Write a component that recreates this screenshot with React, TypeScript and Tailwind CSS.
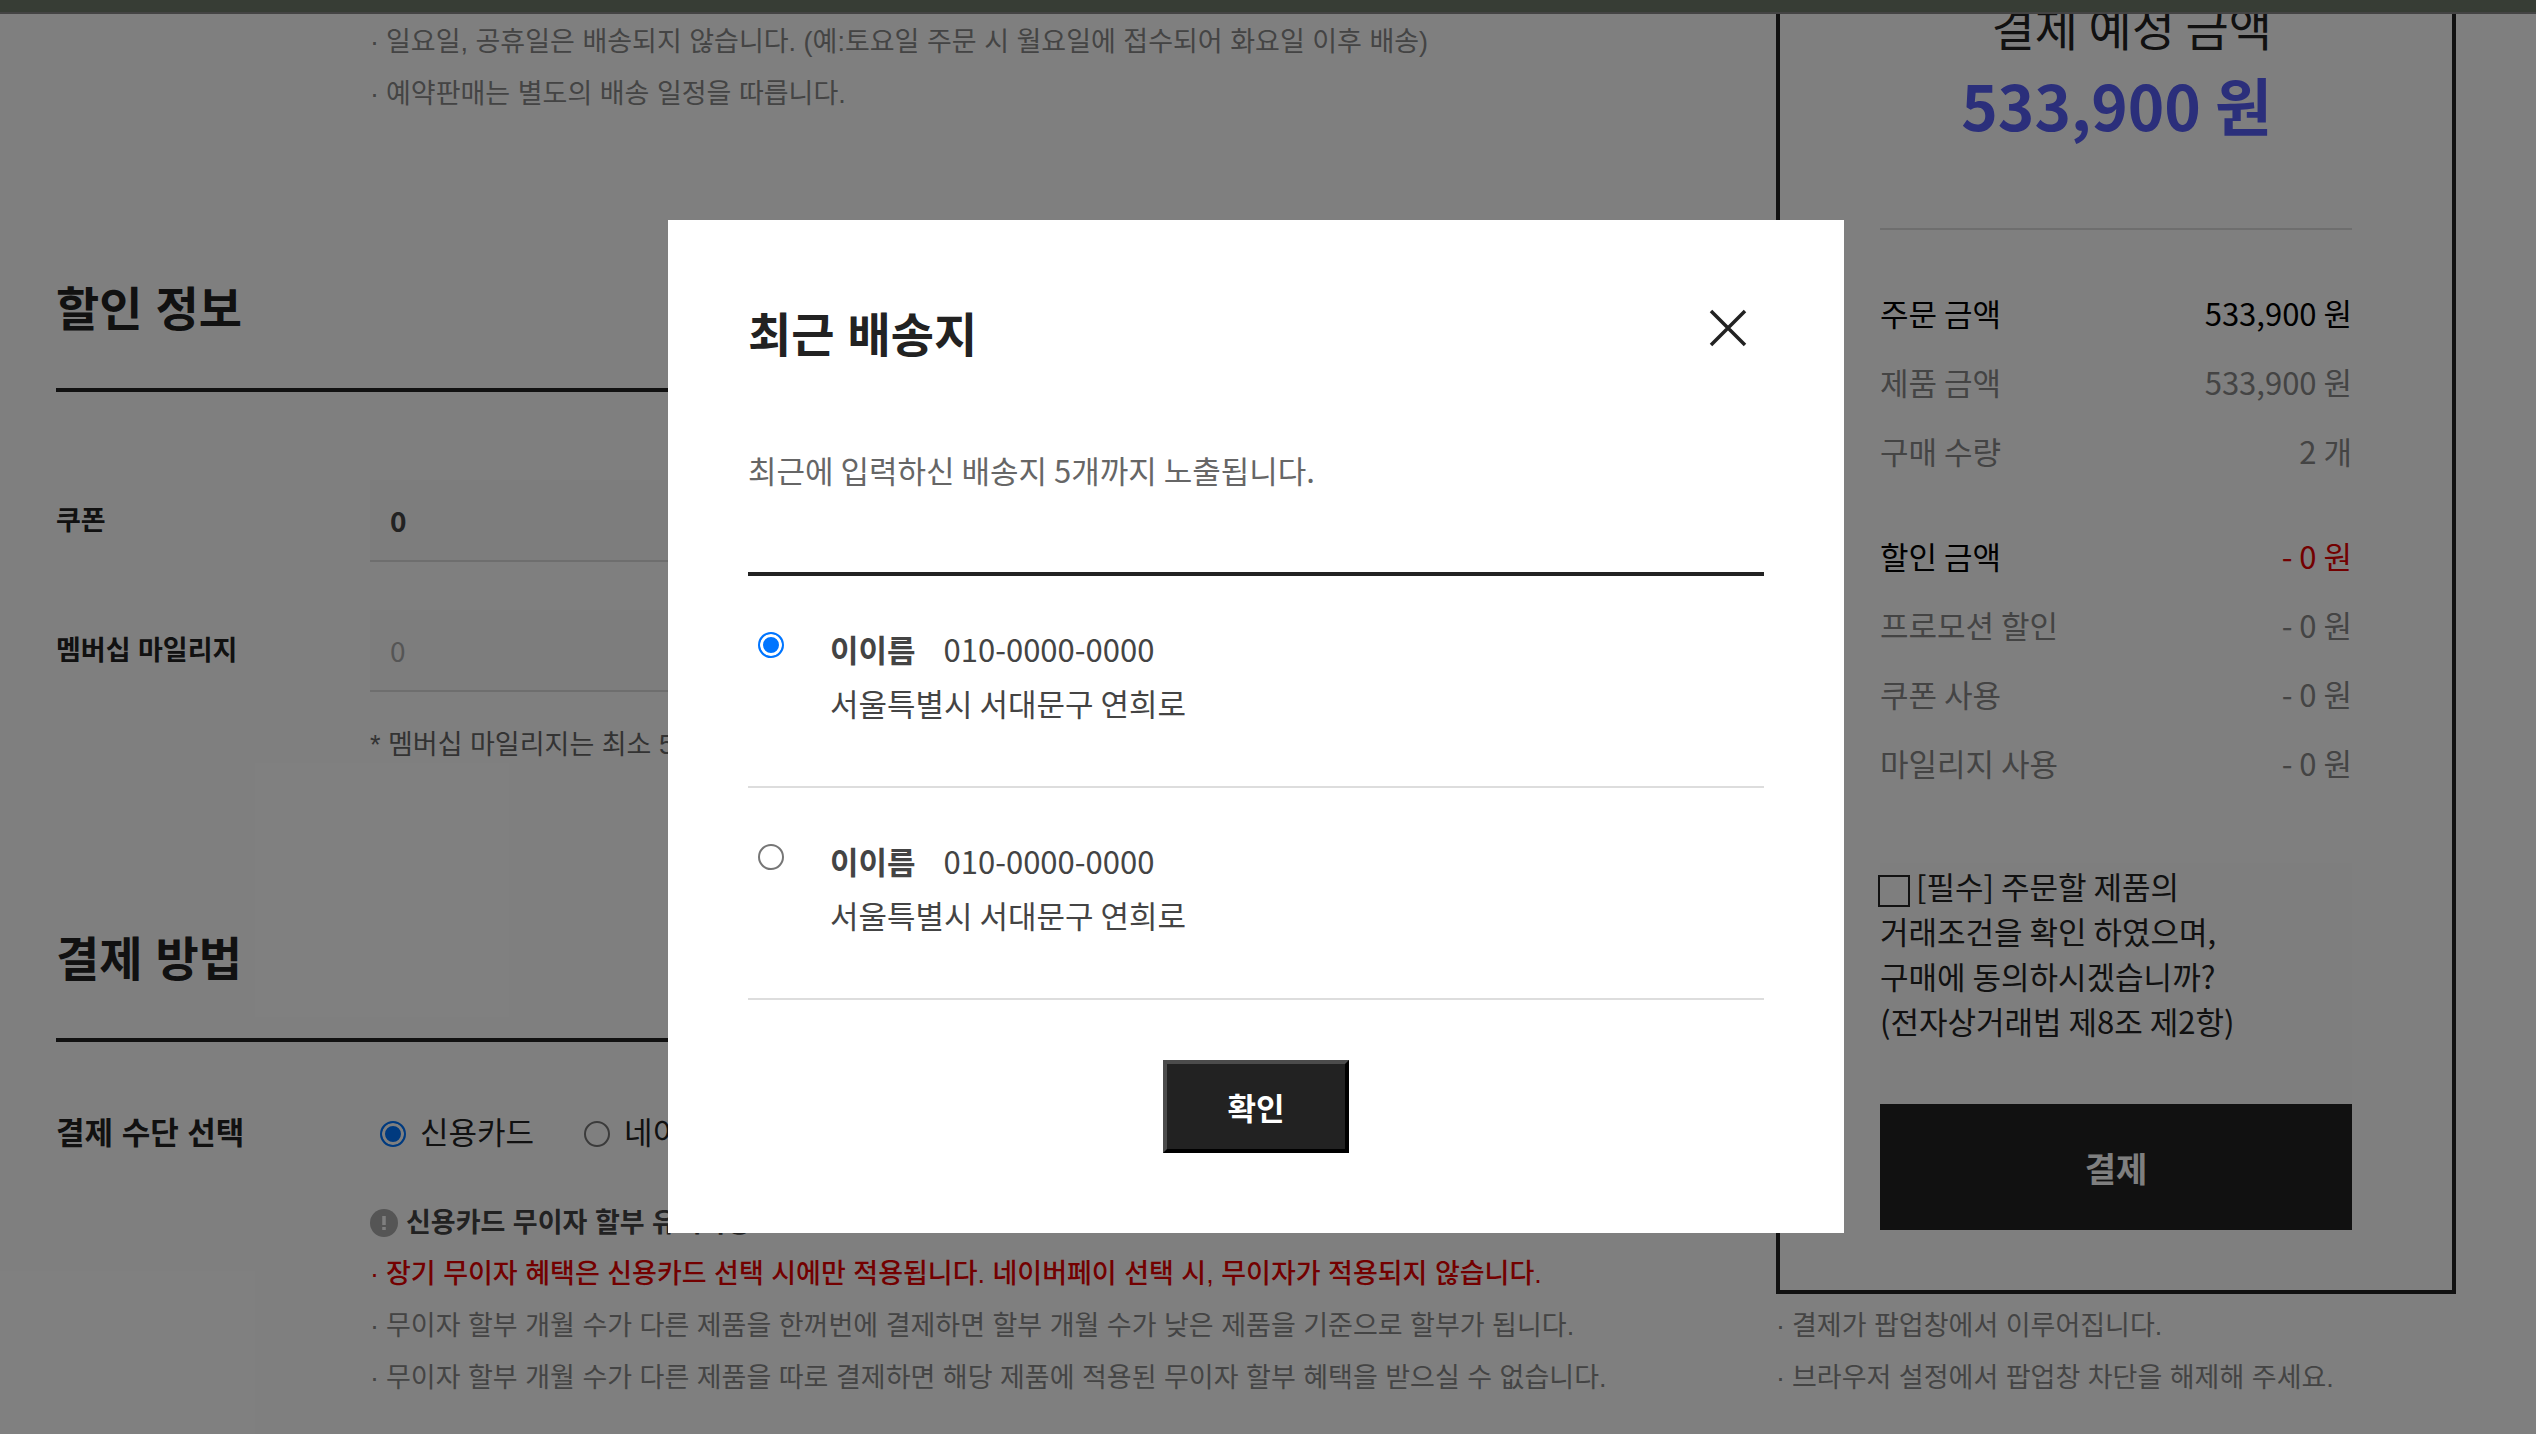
import * as React from "react"

const deliveryNotes = [
  "일요일, 공휴일은 배송되지 않습니다. (예:토요일 주문 시 월요일에 접수되어 화요일 이후 배송)",
  "예약판매는 별도의 배송 일정을 따릅니다.",
]

const installmentNotes = [
  "무이자 할부 개월 수가 다른 제품을 한꺼번에 결제하면 할부 개월 수가 낮은 제품을 기준으로 할부가 됩니다.",
  "무이자 할부 개월 수가 다른 제품을 따로 결제하면 해당 제품에 적용된 무이자 할부 혜택을 받으실 수 없습니다.",
]

const popupNotes = [
  "결제가 팝업창에서 이루어집니다.",
  "브라우저 설정에서 팝업창 차단을 해제해 주세요.",
]

const orderRows = [
  { label: "주문 금액", value: "533,900 원", labelClass: "text-black", valueClass: "text-black" },
  { label: "제품 금액", value: "533,900 원", labelClass: "text-[#888]", valueClass: "text-[#888]" },
  { label: "구매 수량", value: "2 개", labelClass: "text-[#888]", valueClass: "text-[#888]" },
]

const discountRows = [
  { label: "할인 금액", value: "- 0 원", labelClass: "text-black", valueClass: "text-[#e60000]" },
  { label: "프로모션 할인", value: "- 0 원", labelClass: "text-[#888]", valueClass: "text-[#888]" },
  { label: "쿠폰 사용", value: "- 0 원", labelClass: "text-[#888]", valueClass: "text-[#888]" },
  { label: "마일리지 사용", value: "- 0 원", labelClass: "text-[#888]", valueClass: "text-[#888]" },
]

const addresses = [
  { id: "addr-1", name: "이이름", phone: "010-0000-0000", address: "서울특별시 서대문구 연희로" },
  { id: "addr-2", name: "이이름", phone: "010-0000-0000", address: "서울특별시 서대문구 연희로" },
]

// Headings and running text take their spaces and punctuation from the Latin face
const proseFont = "font-['Liberation_Sans','Noto_Sans_CJK_KR',sans-serif]"

export default function App() {
  const [open, setOpen] = React.useState(true)

  return (
    <div className="relative min-h-screen overflow-hidden bg-white text-[#222] font-['Noto_Sans_CJK_KR','Noto_Sans',sans-serif]">
      <header className="relative z-10 h-[14px] border-b-2 border-[#888] bg-[#6f7a6b]" />

      <main className="flex items-start pl-14 pr-20">
        <div className="flex-1 pr-20 pt-0.5">
          <NoteList notes={deliveryNotes} className="pl-[314px]" />
          <DiscountSection />
          <PaymentSection />
        </div>
        <OrderSummary />
      </main>

      {open && <AddressModal onClose={() => setOpen(false)} />}
    </div>
  )
}

function NoteList({ notes, className = "" }: { notes: string[]; className?: string }) {
  return (
    <ul className={proseFont + " text-[27px] leading-[52px] text-[#888] whitespace-nowrap " + className}>
      {notes.map((note) => (
        <li key={note} className="flex">
          <span className="w-4">·</span>
          {note}
        </li>
      ))}
    </ul>
  )
}

function SectionTitle({ children }: { children: React.ReactNode }) {
  return (
    <h2 className={proseFont + " mt-[156px] border-b-4 border-[#222] pb-11 text-[47px] leading-[68px] font-bold"}>
      {children}
    </h2>
  )
}

function DiscountSection() {
  return (
    <section className={proseFont}>
      <SectionTitle>할인 정보</SectionTitle>
      <div className="flex items-center pt-[88px]">
        <label htmlFor="coupon" className="w-[314px] text-[27px] font-bold">쿠폰</label>
        <input
          id="coupon"
          defaultValue="0"
          className="h-[82px] flex-1 border-b-2 border-[#ddd] bg-[#fafafa] px-5 font-['Noto_Sans_CJK_KR',sans-serif] text-[28px] font-bold text-[#444]"
        />
      </div>
      <div className="flex items-center pt-12">
        <label htmlFor="mileage" className="w-[314px] text-[27px] font-bold">멤버십 마일리지</label>
        <input
          id="mileage"
          placeholder="0"
          className="h-[82px] flex-1 border-b-2 border-[#ddd] bg-[#fafafa] px-5 font-['Noto_Sans_CJK_KR',sans-serif] text-[28px] placeholder:text-[#aaa]"
        />
      </div>
      <p className="mt-7 pl-[314px] text-[27px] leading-[50px] text-[#666]">
        * 멤버십 마일리지는 최소 5,000부터 사용 가능합니다.
      </p>
    </section>
  )
}

function PaymentSection() {
  return (
    <section className={proseFont}>
      <SectionTitle>결제 방법</SectionTitle>
      <div className="flex items-center pt-[66px] text-[31px] leading-[52px]">
        <span className="w-[314px] font-bold">결제 수단 선택</span>
        <Radio id="pay-card" name="pay" defaultChecked className="ml-2.5" />
        <label htmlFor="pay-card" className="ml-3.5">신용카드</label>
        <Radio id="pay-naver" name="pay" className="ml-[50px]" />
        <label htmlFor="pay-naver" className="ml-3.5">네이버페이</label>
      </div>
      <div className="mt-[38px] pl-[314px] text-[27px] leading-[52px] whitespace-nowrap">
        <p className="flex items-center gap-2 leading-[50px] font-bold text-[#444]">
          <svg viewBox="0 0 28 28" className="size-7">
            <circle cx="14" cy="14" r="14" fill="#aaa" />
            <path d="M14 7v9M14 18v3" stroke="#fff" strokeWidth="3.5" />
          </svg>
          신용카드 무이자 할부 유의사항
        </p>
        <p className="flex font-medium text-[#e60000]">
          <span className="w-4">·</span>
          장기 무이자 혜택은 신용카드 선택 시에만 적용됩니다. 네이버페이 선택 시, 무이자가 적용되지 않습니다.
        </p>
      </div>
      <NoteList notes={installmentNotes} className="pl-[314px]" />
    </section>
  )
}

function Radio({ className = "", ...props }: React.InputHTMLAttributes<HTMLInputElement>) {
  return (
    <input
      type="radio"
      className={
        "size-[26px] shrink-0 appearance-none rounded-full border-2 border-[#767676] bg-white checked:border-[#0075ff] checked:bg-[#0075ff] checked:shadow-[inset_0_0_0_3px_white] " +
        className
      }
      {...props}
    />
  )
}

function OrderSummary() {
  return (
    <aside className="w-[680px] shrink-0">
      <div className="border-4 border-t-0 border-[#222] px-[100px] pb-[60px]">
        {/* The first line runs up under the page header */}
        <div className="-mt-4 border-b-2 border-[#ddd] pb-[82px] pr-20 text-right">
          <p className="text-[47px] leading-[56px]">결제 예정 금액</p>
          <p className="mt-2 text-[62px] leading-[84px] font-bold text-[#565ef6]">533,900 원</p>
        </div>
        <AmountList rows={orderRows} className="mt-12" />
        <AmountList rows={discountRows} className="mt-9" />
        <div className="mt-[66px] h-[241px] bg-[#fcfcfc] text-[31px] leading-[45px]">
          <input
            id="agree"
            type="checkbox"
            className="-ml-0.5 mr-1.5 size-8 appearance-none border-2 border-[#222] align-middle"
          />
          <label htmlFor="agree">
            [필수] 주문할 제품의
            <br />
            거래조건을 확인 하였으며,
            <br />
            구매에 동의하시겠습니까?
            <br />
            (전자상거래법 제8조 제2항)
          </label>
        </div>
        <button type="button" className="h-[126px] w-full bg-[#222] text-[34px] font-bold text-white">
          결제
        </button>
      </div>
      <NoteList notes={popupNotes} className="mt-1.5" />
    </aside>
  )
}

type AmountRow = { label: string; value: string; labelClass: string; valueClass: string }

function AmountList({ rows, className }: { rows: AmountRow[]; className: string }) {
  return (
    <dl className={"text-[31px] leading-[69px] " + className}>
      {rows.map((row) => (
        <div key={row.label} className="flex justify-between">
          <dt className={row.labelClass}>{row.label}</dt>
          <dd className={row.valueClass}>{row.value}</dd>
        </div>
      ))}
    </dl>
  )
}

function AddressModal({ onClose }: { onClose: () => void }) {
  return (
    <div className="absolute inset-0 z-20 flex items-start justify-center bg-black/50 pt-[220px] pr-6">
      <div role="dialog" aria-label="최근 배송지" className="w-[1176px] bg-white px-20 pb-20">
        <div className="flex items-start justify-between pt-[82px]">
          <h2 className={proseFont + " text-[47px] leading-[68px] font-bold"}>최근 배송지</h2>
          <button type="button" aria-label="닫기" onClick={onClose} className="mt-1.5 mr-4">
            <svg viewBox="0 0 40 40" className="size-10" fill="none" stroke="#222" strokeWidth="3.5">
              <path d="M3 3l34 34M37 3L3 37" />
            </svg>
          </button>
        </div>
        <p className="mt-[74px] text-[31px] leading-[52px] text-[#666]">
          최근에 입력하신 배송지 5개까지 노출됩니다.
        </p>

        <ul className="mt-[76px] border-t-4 border-[#222]">
          {addresses.map((item, i) => (
            <li key={item.id} className="flex border-b-2 border-[#ddd] pt-[46px] pb-14 text-[31px] leading-[54px] text-[#444]">
              <Radio id={item.id} name="address" defaultChecked={i === 0} className="mt-2.5 ml-2.5" />
              <label htmlFor={item.id} className="ml-[46px]">
                <strong className="mr-7 font-bold">{item.name}</strong>
                {item.phone}
                <br />
                {item.address}
              </label>
            </li>
          ))}
        </ul>

        <button
          type="button"
          onClick={onClose}
          className="mx-auto mt-[60px] block border-4 border-t-[#4c4c4c] border-r-black border-b-black border-l-[#4c4c4c] bg-[#222] px-[60px] py-5 text-[31px] leading-[45px] font-bold text-white"
        >
          확인
        </button>
      </div>
    </div>
  )
}
